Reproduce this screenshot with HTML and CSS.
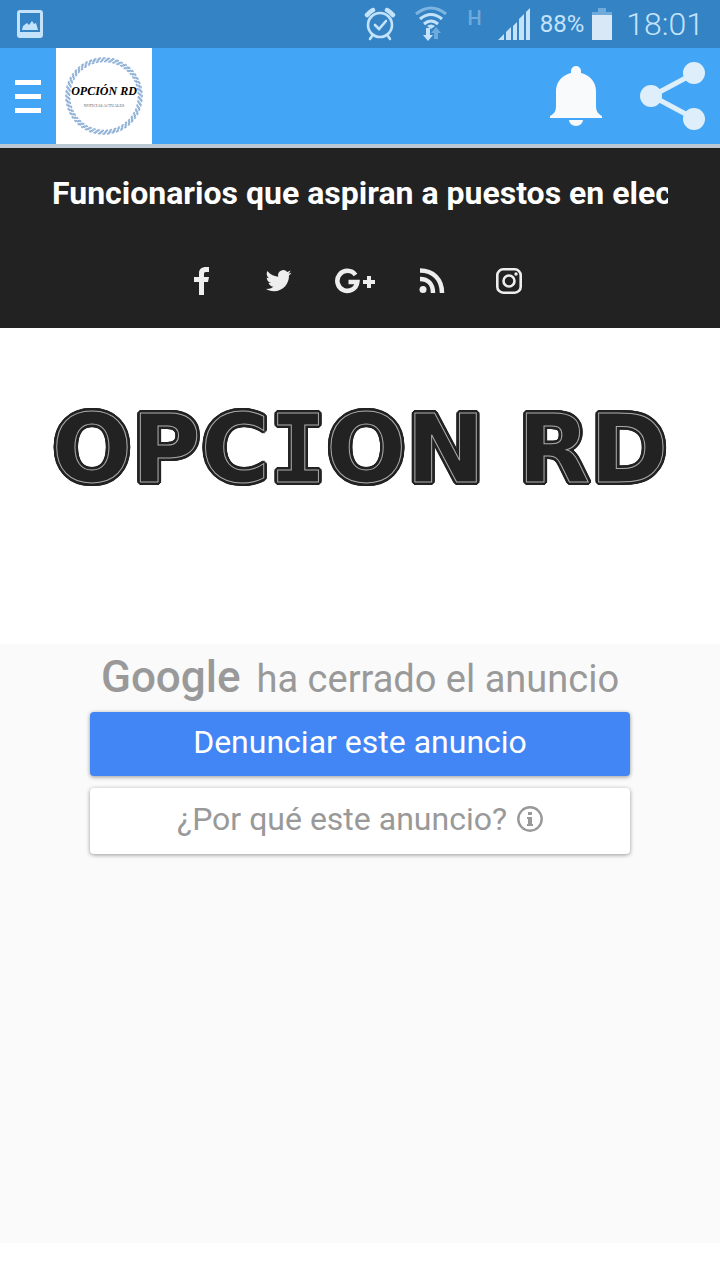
FILE: index.html
```
<!DOCTYPE html>
<html lang="es">
<head>
<meta charset="utf-8">
<meta name="viewport" content="width=device-width, initial-scale=1">
<title>Opción RD</title>
<link rel="stylesheet" href="styles.css">
</head>
<body>
<div class="status">
  <svg class="status-photo" width="28" height="30" viewBox="0 0 28 30" fill="#c4e3fb"><path fill-rule="evenodd" d="M4 1h20a3 3 0 0 1 3 3v22a3 3 0 0 1-3 3H4a3 3 0 0 1-3-3V4a3 3 0 0 1 3-3zm0 3v19h20V4z"/><path d="M6 21l1-4 4-3 2 2 3-4 2 3 2-1 2 7z"/></svg>
  <svg width="32" height="34" viewBox="0 0 32 34" fill="none" stroke="#c4e3fb" stroke-width="2.6" stroke-linecap="round"><circle cx="16" cy="18" r="12"/><path d="M11 18l4 4 7-8M8 29l-2 3M24 29l2 3"/><path d="M3 8a20 20 0 0 1 6-5M29 8a20 20 0 0 0-6-5" stroke-width="4.5"/></svg>
  <svg class="status-wifi" width="34" height="36" viewBox="0 0 34 36" fill="none" stroke="#c4e3fb" stroke-width="3"><path d="M2 8q15-12 30 0" stroke="#7db5e2"/><path d="M6 13q11-9 22 0M10 18q7-6 14 0"/><path d="M13 20q4-3 8 0l-4 3z" fill="#c4e3fb" stroke="none"/><path d="M12 22h4v7h3l-5 6-5-6h3z" fill="#c4e3fb" stroke="none"/><path d="M20 33v-6h-3l5-6 5 6h-3v6z" fill="#6faadd" stroke="none"/></svg>
  <span class="status-net">H</span>
  <svg class="status-signal" width="34" height="34" viewBox="0 0 34 34" fill="#c4e3fb"><path d="M0 33l6-6v6zM8 25l5-5v13H8zM15 19l4-4v18h-4zM21 12l5-5v26h-5zM28 5l4-4v32h-4z"/></svg>
  <span class="status-charge">88%</span>
  <svg class="status-battery" width="20" height="32" viewBox="0 0 20 32"><path fill="#6faadd" d="M6 0h8v4h6v3H0V4h6z"/><path fill="#d9e8f6" d="M0 7h20v25H0z"/></svg>
  <time class="status-time">18:01</time>
</div>
<header class="appbar">
  <button class="menu" aria-label="Menú"><span></span><span></span><span></span></button>
  <svg class="brand" width="96" height="96" viewBox="0 0 96 96" role="img" aria-label="Opción RD">
    <rect width="96" height="96" fill="#fff"/>
    <g fill="none" stroke="#8fb0d6" stroke-width="1.500" stroke-dasharray="2.400 1.600">
      <circle cx="48" cy="48" r="34.500" pathLength="208"/>
      <circle cx="48" cy="48" r="35.700" pathLength="208" stroke-dashoffset="-1"/>
      <circle cx="48" cy="48" r="36.900" pathLength="208" stroke-dashoffset="-2"/>
      <circle cx="48" cy="48" r="38" pathLength="208" stroke-dashoffset="-3"/>
    </g>
    <text class="brand-name" x="48" y="47" text-anchor="middle">OPCIÓN RD</text>
    <text class="brand-sub" x="48" y="59" text-anchor="middle">NOTICIAS ACTUALES</text>
  </svg>
  <div class="actions">
    <button aria-label="Notificaciones"><svg width="54" height="64" viewBox="0 0 54 64" fill="#f8fafc"><path d="M27 2a5 5 0 0 1 5 5v2c9 2 15 9 15 18v15c0 5 2 8 6 10v2H1v-2c4-2 6-5 6-10V27C7 18 13 11 22 9V7a5 5 0 0 1 5-5zM20 56h14a7 6 0 0 1-14 0z"/></svg></button>
    <button aria-label="Compartir"><svg width="68" height="70" viewBox="0 0 68 70" fill="#deeefb"><path d="M56 12L13 35l43 23" fill="none" stroke="#deeefb" stroke-width="5"/><circle cx="12" cy="35" r="11"/><circle cx="55" cy="12" r="11"/><circle cx="55" cy="58" r="11"/></svg></button>
  </div>
</header>
<section class="topbar">
  <p class="headline">Funcionarios que aspiran a puestos en elecciones</p>
  <nav class="social">
    <a href="#" aria-label="Facebook"><svg width="28" height="28" viewBox="0 0 28 28"><path d="M22 0v5h-3c-2 0-2 1-2 2v3h5l-1 5h-4v13h-5V15H7v-5h5V6c0-4 3-6 7-6z"/></svg></a>
    <a href="#" aria-label="Twitter"><svg width="28" height="28" viewBox="0 0 24 24"><path d="M23.4 4.9c-.8.4-1.700.6-2.600.7.9-.6 1.600-1.500 2-2.500-.9.5-1.800.9-2.900 1.100a4.500 4.500 0 0 0-7.700 4.100C8.400 8.100 5.100 6.300 2.900 3.500c-1.200 2.100-.6 4.700 1.400 6.100-.7 0-1.400-.2-2-.6 0 2.200 1.500 4.200 3.600 4.600-.7.2-1.400.2-2 .1.600 1.800 2.300 3.100 4.200 3.200A9 9 0 0 1 1.400 18.700c2 1.300 4.400 2.100 7 2.100 8.400 0 13.300-7.100 13-13.500.9-.6 1.600-1.400 2-2.400z"/></svg></a>
    <a href="#" aria-label="Google Plus"><svg width="40" height="28" viewBox="0 0 40 28"><path d="M20.500 8A10 10 0 1 0 22.300 15H13.500" fill="none" stroke="#eee" stroke-width="4.600"/><path d="M32 9h4v4h4v4h-4v4h-4v-4h-4v-4h4z"/></svg></a>
    <a href="#" aria-label="RSS"><svg width="28" height="28" viewBox="0 0 28 28"><circle cx="5" cy="22.500" r="3.500"/><path d="M2 3.500C15 3.500 24 12 24 26M2 12c8 0 13 5 13 14" fill="none" stroke="#eee" stroke-width="4.500"/></svg></a>
    <a href="#" aria-label="Instagram"><svg width="28" height="28" viewBox="0 0 28 28"><g fill="none" stroke="#eee" stroke-width="2.600"><rect x="2.300" y="2.300" width="23.400" height="23.400" rx="6"/><circle cx="14" cy="14" r="5.500"/></g><circle cx="21" cy="7" r="1.700"/></svg></a>
  </nav>
</section>
<main>
  <h1 class="title">OPC<span class="slab">I</span>ON RD</h1>
  <aside class="ad">
    <p class="ad-note"><span class="ad-brand">Google</span><span>ha cerrado el anuncio</span></p>
    <button class="ad-btn ad-report">Denunciar este anuncio</button>
    <button class="ad-btn ad-why">¿Por qué este anuncio?<svg width="26" height="26" viewBox="0 0 26 26" fill="#999"><circle cx="13" cy="13" r="11.700" fill="none" stroke="#999" stroke-width="2.400"/><path d="M11 6h4v3h-4zM10 11h5v7h1v2h-6v-2h1v-5h-1z"/></svg></button>
  </aside>
</main>
</body>
</html>
```
FILE: styles.css
```
* { box-sizing: border-box; }
body { margin: 0; min-height: 100vh; background: #fff; font-family: Roboto, sans-serif; }
button { border: 0; padding: 0; background: none; font: inherit; }
svg { display: block; }

.status { display: flex; align-items: center; height: 48px; padding: 0 16px; background: #3483c4; color: #c4e3fb; }
.status-photo { margin-right: auto; }
.status-wifi { margin-left: 18px; }
.status-net { align-self: flex-start; margin: 6px 16px 0 20px; color: #6faadd; font-size: 20px; font-weight: 500; line-height: 24px; }
.status-charge { margin-left: 8px; font-size: 24px; }
.status-battery { margin-left: 8px; }
.status-time { margin-left: 14px; font-size: 32px; font-weight: 300; }

.appbar { display: flex; align-items: center; height: 100px; background: #42a5f5; border-bottom: 4px solid #bcc9d4; }
.menu { display: grid; gap: 9px; width: 56px; padding-left: 15px; }
.menu span { width: 26px; height: 5px; background: #fff; }
.brand-name { font: italic bold 12px "Liberation Serif", serif; }
.brand-sub { font: 4px "Liberation Serif", serif; fill: #555; }
.actions { display: flex; align-items: center; gap: 36px; margin-left: auto; padding-right: 13px; }

.topbar { height: 180px; padding: 24px 52px 0; background: #222; }
.headline { margin: 0; overflow: hidden; white-space: nowrap; color: #fff; font-size: 32px; font-weight: 700; line-height: 42px; }
.social { display: flex; justify-content: center; margin-top: 46px; padding-right: 10px; }
.social a { display: flex; justify-content: center; align-items: center; width: 77px; height: 42px; }
.social svg { fill: #eee; }

.title {
  margin: 0; padding: 32px 0 104px; text-align: center; white-space: nowrap;
  font: bold 94px/180px "DejaVu Sans", sans-serif; color: #222;
  -webkit-text-stroke: 1px #aaa;
  text-shadow: 3px 0 #222, -3px 0 #222, 0 3px #222, 0 -3px #222, 3px 1px #222, 3px -1px #222, -3px 1px #222, -3px -1px #222, 1px 3px #222, -1px 3px #222, 1px -3px #222, -1px -3px #222, 2px 2px #222, -2px 2px #222, 2px -2px #222, -2px -2px #222;
}
.slab { font-family: "DejaVu Sans Mono", monospace; }

.ad { display: flex; flex-direction: column; align-items: center; min-height: 599px; padding: 0 12.5%; background: #fafafa; color: #999; }
.ad-note { display: flex; align-items: baseline; gap: 16px; margin: 0; font-size: 38px; line-height: 66px; white-space: nowrap; }
.ad-brand { font-size: 44px; font-weight: 500; }
.ad-btn { display: flex; justify-content: center; align-items: center; gap: 10px; width: 100%; height: 64px; padding-bottom: 4px; border-radius: 4px; font-size: 32px; box-shadow: 0 1px 4px rgba(0, 0, 0, .4); }
.ad-report { background: #4285f4; color: #fff; }
.ad-why { height: 66px; margin-top: 12px; background: #fff; color: #999; }
```
